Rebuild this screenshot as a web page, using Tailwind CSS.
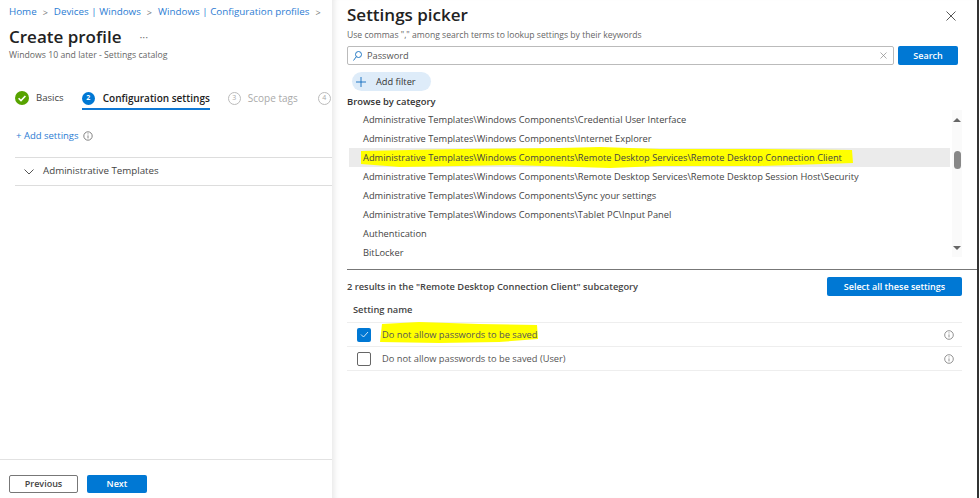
<!DOCTYPE html>
<html lang="en">
<head>
    <meta charset="UTF-8">
    <title>Create profile - Settings picker</title>
    <script src="https://cdn.jsdelivr.net/npm/@tailwindcss/browser@4"></script>
</head>
<body class="bg-white overflow-hidden font-['Open_Sans',sans-serif]">
    <div class="flex w-[980px] h-[498px] overflow-hidden">
        <!-- left blade -->
        <div class="w-[332px] h-full flex flex-col shrink-0 overflow-hidden">
            <nav class="flex items-center gap-[6px] pl-[9px] pt-[4px] h-[21px] text-[9.800px] text-[#2b7cd3] whitespace-nowrap">
                <span>Home</span><span class="text-[#777] text-[9px]">&gt;</span>
                <span>Devices | Windows</span><span class="text-[#777] text-[9px]">&gt;</span>
                <span>Windows | Configuration profiles</span><span class="text-[#777] text-[9px]">&gt;</span>
            </nav>
            <div class="flex items-center pl-[9px] mt-[3px] h-[24px]">
                <h1 class="text-[17px] font-semibold text-[#222] leading-none">Create profile</h1>
                <span class="ml-[18px] text-[11px] text-[#777] leading-none">···</span>
            </div>
            <p class="pl-[9px] mt-[1px] text-[8.700px] leading-[12px] text-[#666]">Windows 10 and later - Settings catalog</p>

            <div class="flex items-start pl-[15px] mt-[27px] h-[22px] text-[10px] whitespace-nowrap">
                <div class="flex items-center gap-[7px] h-[20px]">
                    <svg width="14" height="14" viewBox="0 0 14 14"><circle cx="7" cy="7" r="7" fill="#57a300"/><path d="M3.600 7.200l2.400 2.400 4.400-4.600" fill="none" stroke="#fff" stroke-width="1.600"/></svg>
                    <span class="text-[9.600px] text-[#444]">Basics</span>
                </div>
                <div class="ml-[18px] flex items-center gap-[8px] h-[22px] border-b-2 border-[#0f78d4]">
                    <span class="flex items-center justify-center w-[13px] h-[13px] rounded-full bg-[#0078d4] text-white text-[7px] font-bold">2</span>
                    <span class="font-semibold text-[#222]">Configuration settings</span>
                </div>
                <div class="ml-[18px] flex items-center gap-[7px] h-[20px] text-[#aaa]">
                    <span class="flex items-center justify-center w-[13px] h-[13px] rounded-full border border-[#bbb] text-[7px]">3</span>
                    <span>Scope tags</span>
                </div>
                <div class="ml-[20px] flex items-center h-[20px] text-[#aaa]">
                    <span class="flex items-center justify-center w-[13px] h-[13px] rounded-full border border-[#bbb] text-[7px]">4</span>
                </div>
            </div>

            <div class="flex items-center gap-[4px] pl-[16px] mt-[17px] h-[18px] text-[9.500px] text-[#2b7cd3]">
                <span>+ Add settings</span>
                <svg width="10" height="10" viewBox="0 0 10 10" fill="none" stroke="#666" stroke-width=".8"><circle cx="5" cy="5" r="4.200"/><path d="M5 4.400v3M5 2.400v1"/></svg>
            </div>

            <div class="ml-[15px] mt-[12px] h-[29px] flex items-center border-y border-[#ddd]">
                <svg class="ml-[9px]" width="10" height="6" viewBox="0 0 10 6" fill="none" stroke="#555"><path d="M.5.5L5 5 9.500.5"/></svg>
                <span class="ml-[9px] text-[9.750px] text-[#444]">Administrative Templates</span>
            </div>

            <div class="mt-auto h-[39px] border-t border-[#e2e2e2] flex items-start pl-[9px] pt-[15px] gap-[9px]">
                <button class="w-[69px] h-[18px] border border-[#777] rounded-[2px] text-[9px] font-semibold text-[#444]">Previous</button>
                <button class="w-[60px] h-[18px] bg-[#0078d4] rounded-[2px] text-[9px] font-semibold text-white">Next</button>
            </div>
        </div>

        <!-- settings picker -->
        <div class="w-[645px] h-full shadow-[inset_7px_0_6px_-5px_rgba(0,0,0,0.1)] flex flex-col pl-[15px] shrink-0">
            <div class="flex items-start h-[30px] pt-[2px] pr-[21px]">
                <h2 class="text-[17px] font-semibold text-[#222] leading-[26px]">Settings picker</h2>
                <svg class="ml-auto mt-[9px]" width="10" height="10" viewBox="0 0 10 10" stroke="#444" stroke-width=".9"><path d="M.5.5l9 9M9.500.5l-9 9"/></svg>
            </div>
            <p class="text-[8.600px] leading-[12px] mt-[-1px] text-[#666]">Use commas "," among search terms to lookup settings by their keywords</p>

            <div class="flex gap-[4px] mt-[5px] pr-[19px]">
                <div class="flex-1 h-[19px] border border-[#bbb] rounded-[2px] flex items-center pl-[5px] pr-[6px]">
                    <svg width="9" height="10" viewBox="0 0 9 10" fill="none" stroke="#0f6cbd" stroke-width=".9"><circle cx="5.500" cy="3.500" r="3"/><path d="M3.300 5.700L.5 9.500"/></svg>
                    <span class="ml-[5px] text-[9.250px] text-[#555]">Password</span>
                    <svg class="ml-auto" width="7" height="7" viewBox="0 0 7 7" stroke="#888" stroke-width=".7"><path d="M.5.5l6 6M6.500.5l-6 6"/></svg>
                </div>
                <button class="w-[60px] h-[19px] bg-[#0078d4] rounded-[2px] text-[9px] font-semibold text-white">Search</button>
            </div>

            <div class="flex items-center w-[79px] h-[19px] mt-[7px] ml-[5px] rounded-full bg-[#deecf9] text-[9.250px] text-[#333]">
                <svg class="ml-[4px]" width="10" height="10" viewBox="0 0 10 10" stroke="#0f6cbd" stroke-width=".9"><path d="M5 0v10M0 5h10"/></svg>
                <span class="ml-[10px]">Add filter</span>
            </div>

            <p class="mt-[4px] text-[9.400px] leading-[14px] font-semibold text-[#333]">Browse by category</p>

            <!-- category list -->
            <div class="flex pr-[15px] h-[160px] mt-[1px] border-b border-[#777]">
                <ul class="flex-1 mr-[2px] text-[9.300px] text-[#444] whitespace-nowrap">
                    <li class="h-[19px] flex items-center pl-[16px]">Administrative Templates\Windows Components\Credential User Interface</li>
                    <li class="h-[19px] flex items-center pl-[16px]">Administrative Templates\Windows Components\Internet Explorer</li>
                    <li class="relative h-[19px] flex items-center pl-[14px] ml-[2px] bg-[#ebebeb]">
                        <svg class="absolute left-[11px] top-[-1px]" width="494" height="21" viewBox="0 0 494 21"><path d="M1 4L50 3L100 2L200 1L240 0L300 2L400 2L492 3L493 16L400 19L300 19L250 21L150 18L100 19L40 20L1 17Z" fill="#ffff00"/></svg>
                        <span class="relative">Administrative Templates\Windows Components\Remote Desktop Services\Remote Desktop Connection Client</span>
                    </li>
                    <li class="h-[19px] flex items-center pl-[16px]">Administrative Templates\Windows Components\Remote Desktop Services\Remote Desktop Session Host\Security</li>
                    <li class="h-[19px] flex items-center pl-[16px]">Administrative Templates\Windows Components\Sync your settings</li>
                    <li class="h-[19px] flex items-center pl-[16px]">Administrative Templates\Windows Components\Tablet PC\Input Panel</li>
                    <li class="h-[19px] flex items-center pl-[16px]">Authentication</li>
                    <li class="h-[19px] flex items-center pl-[16px]">BitLocker</li>
                </ul>
                <div class="w-[10px] h-[147px] bg-[#fafafa] flex flex-col items-center pt-[8px]">
                    <span class="w-0 h-0 border-x-[4px] border-x-transparent border-b-[4px] border-b-[#666]"></span>
                    <span class="w-[7px] h-[18px] mt-[29px] rounded-full bg-[#888]"></span>
                    <span class="w-0 h-0 mt-[77px] border-x-[4px] border-x-transparent border-t-[4px] border-t-[#666]"></span>
                </div>
            </div>

            <div class="flex items-center justify-between h-[19px] mt-[7px] pr-[15px]">
                <p class="text-[9.300px] font-semibold text-[#444]">2 results in the "Remote Desktop Connection Client" subcategory</p>
                <button class="w-[135px] h-[19px] bg-[#0078d4] rounded-[2px] text-[9px] font-semibold text-white">Select all these settings</button>
            </div>

            <p class="mt-[5px] pl-[6px] h-[21px] pb-[3px] flex items-center text-[9.300px] font-semibold text-[#444]">Setting name</p>

            <div class="mr-[15px] h-[24px] border-t border-[#eee] flex items-center pl-[10px] pr-[8px]">
                <span class="flex items-center justify-center w-[14px] h-[14px] rounded-[2px] bg-[#0078d4]">
                    <svg width="9" height="7" viewBox="0 0 9 7" fill="none" stroke="#fff" stroke-width=".8"><path d="M1 3.500l2.500 2.500L8 1"/></svg>
                </span>
                <span class="relative ml-[11px] text-[9.300px] leading-[14px] text-[#555]">
                    <svg class="absolute left-[-3px] top-[-6px]" width="160" height="22" viewBox="0 0 160 22"><path d="M3 2L40 0L100 2L158 3L159 17L120 20L60 21L1 20Z" fill="#ffff00"/></svg>
                    <span class="relative">Do not allow passwords to be saved</span>
                </span>
                <svg class="ml-auto" width="10" height="10" viewBox="0 0 10 10" fill="none" stroke="#777" stroke-width=".8"><circle cx="5" cy="5" r="4.300"/><path d="M5 4.400v3M5 2.400v1"/></svg>
            </div>
            <div class="mr-[15px] h-[25px] border-y border-[#eee] flex items-center pl-[10px] pr-[8px]">
                <span class="w-[14px] h-[14px] rounded-[2px] border border-[#666]"></span>
                <span class="ml-[11px] text-[9.300px] text-[#555]">Do not allow passwords to be saved (User)</span>
                <svg class="ml-auto" width="10" height="10" viewBox="0 0 10 10" fill="none" stroke="#777" stroke-width=".8"><circle cx="5" cy="5" r="4.300"/><path d="M5 4.400v3M5 2.400v1"/></svg>
            </div>
        </div>
        <div class="w-[2px] h-full bg-[#333] shrink-0"></div>
    </div>
</body>
</html>
